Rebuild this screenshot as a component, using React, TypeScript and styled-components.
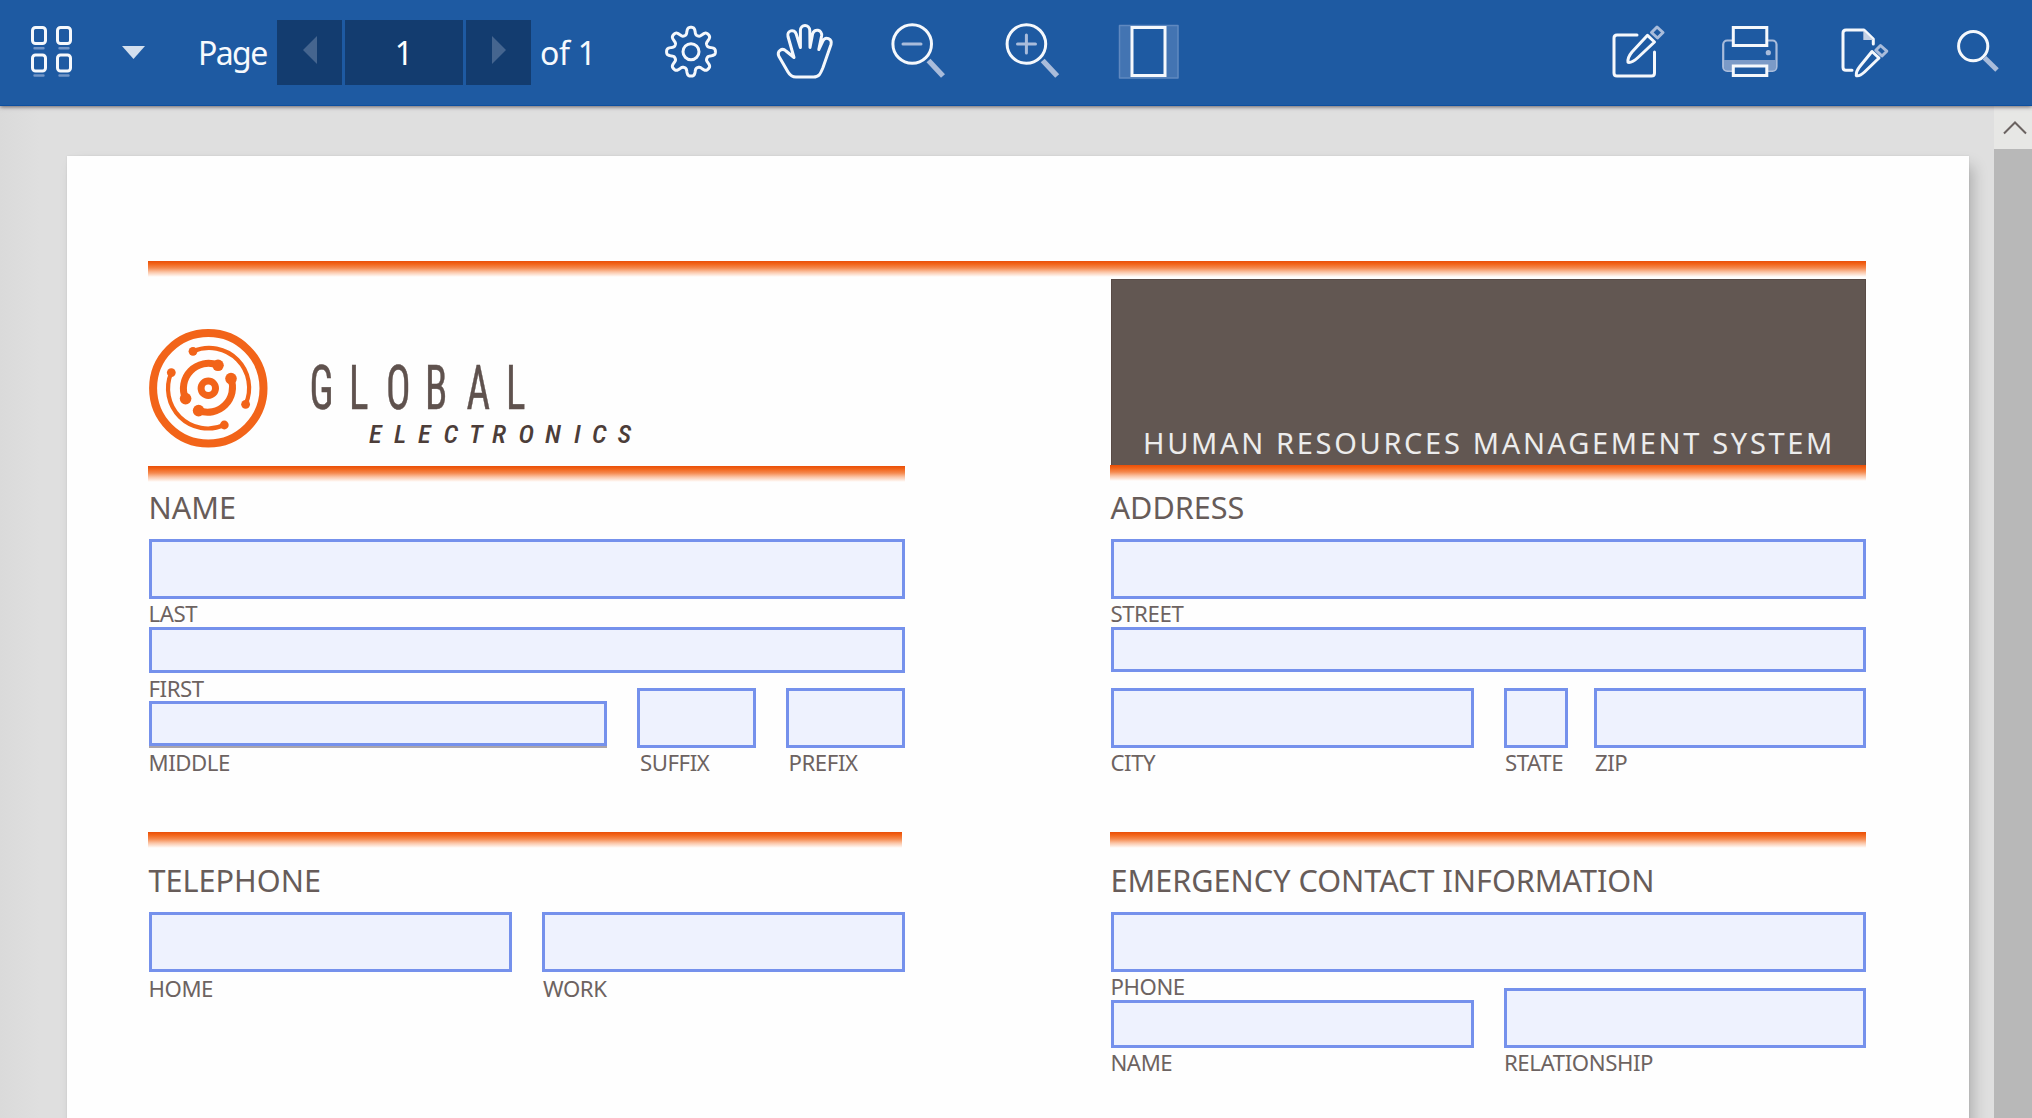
import React from "react";
import styled, { createGlobalStyle } from "styled-components";

const GlobalStyle = createGlobalStyle`
  * { box-sizing: border-box; }
  html, body { margin: 0; padding: 0; overflow: hidden; }
  body { font-family: "Noto Sans", "Open Sans", sans-serif; background: #dfdfdf; }
`;

const ORANGE = "#f26419";
const BROWN = "#625752";

const Shell = styled.div`
  display: flex;
  flex-direction: column;
  width: 2032px;
  height: 1118px;
  overflow: hidden;
  background: #dfdfdf;
`;

const Toolbar = styled.header`
  display: flex;
  align-items: center;
  flex: none;
  height: 106px;
  padding-left: 26px;
  background: #1e5aa2;
  border-bottom: 1px solid #0d4f9f;
  box-shadow: 0 1px 4px rgba(40, 30, 40, 0.65);
  z-index: 1;
`;

const ToolGroup = styled.div<{ $push?: boolean }>`
  display: flex;
  align-items: center;
  margin-left: ${(p) => (p.$push ? "auto" : "0")};
`;

const ToolIcon = styled.svg`
  display: block;
  flex: none;
  height: 70px;
  fill: none;
  stroke: #f5f8fc;
  stroke-width: 3;
  stroke-linejoin: round;
  stroke-linecap: round;

  .soft { stroke: #a9bcdb; }
  .tint { fill: #7b9ac7; stroke: none; }
`;

const PagerText = styled.span<{ $width: number; $tracking: number }>`
  flex: none;
  width: ${(p) => p.$width}px;
  font-size: 32px;
  font-weight: 450;
  line-height: 66px;
  letter-spacing: ${(p) => p.$tracking}px;
  color: #f6f9fd;
  white-space: pre;
`;

const Pager = styled.div`
  display: flex;
  gap: 3px;
  margin: 0 9px 0 6px;
`;

const PagerCell = styled.div<{ $width: number }>`
  display: flex;
  align-items: center;
  justify-content: center;
  width: ${(p) => p.$width}px;
  height: 65px;
  background: #133c6f;
  color: #fff;
  font-size: 32px;
  line-height: 65px;
`;

const Arrow = styled.svg`
  width: 14px;
  height: 28px;
  margin-bottom: 6px;
  fill: #45658f;
`;

const Viewport = styled.main`
  display: flex;
  flex: 1;
  min-height: 0;
`;

const Canvas = styled.div`
  flex: 1;
  padding: 50px 25px 0 67px;
  background: linear-gradient(to right, #dadada 0, #dfdfdf 40px);
  overflow: hidden;
`;

const Sheet = styled.article`
  height: 1100px;
  padding: 105px 0 0 81px;
  background: #fefefe;
  box-shadow: 6px 8px 14px -2px rgba(0, 0, 0, 0.22), 0 0 2px rgba(0, 0, 0, 0.08);
`;

const Scrollbar = styled.aside`
  display: flex;
  flex-direction: column;
  flex: none;
  width: 38px;
  background: #b8b8b8;
`;

const ScrollButton = styled.div`
  display: flex;
  align-items: center;
  justify-content: center;
  height: 43px;
  padding: 1px 0 0 4px;
  background: #e7e7e5;
`;

const Rule = styled.div<{ $width: number }>`
  width: ${(p) => p.$width}px;
  height: 16px;
  background: linear-gradient(to bottom, #e94e08 0, #f26419 3px, #f5894e 7px, #fbc4a5 11px, #fff 16px);
`;

const Columns = styled.div`
  display: grid;
  grid-template-columns: 757px 757px;
  column-gap: 205px;
`;

const Column = styled.section`
  display: flex;
  flex-direction: column;
`;

const BrandArea = styled.div`
  height: 189px;
  padding-top: 43px;
`;

const Banner = styled.div`
  display: flex;
  align-items: flex-end;
  height: 186px;
  margin: 2px 1px 0 1px;
  background: ${BROWN};
  border: 1px solid #594b46;
  border-bottom: 0;
`;

const BannerTitle = styled.div`
  padding-left: 31px;
  font-size: 29px;
  line-height: 44px;
  letter-spacing: 2.67px;
  color: #ececec;
  white-space: nowrap;
`;

const Heading = styled.h2<{ $height: number; $line: number }>`
  margin: 0;
  padding-left: 0.5px;
  height: ${(p) => p.$height}px;
  font-size: 30.6px;
  font-weight: 420;
  line-height: ${(p) => p.$line}px;
  letter-spacing: 0;
  color: #675c59;
`;

const Fields = styled.div<{ $tracks?: string }>`
  display: grid;
  grid-template-columns: ${(p) => p.$tracks ?? "756px"};
  margin-left: 1px;
`;

const Cell = styled.div<{ $drop?: number }>`
  padding-top: ${(p) => p.$drop ?? 0}px;
`;

const Input = styled.div<{ $height?: number; $shaded?: boolean }>`
  height: ${(p) => p.$height ?? 60}px;
  background: #eef2fe;
  border: 3px solid #7591ec;
  ${(p) => p.$shaded && "margin-bottom: 2px; box-shadow: 0 2px 0 #aaa4ab;"}
`;

const Label = styled.div<{ $indent?: number; $line?: number }>`
  height: 28px;
  padding-left: ${(p) => p.$indent ?? 0}px;
  margin-left: -0.6px;
  font-size: 22.2px;
  font-weight: 450;
  line-height: ${(p) => p.$line ?? 30}px;
  letter-spacing: -0.4px;
  color: #6d6361;
  white-space: nowrap;
`;

const Gap = styled.div`
  height: 56px;
`;

const LogoArt = styled.svg`
  display: block;
  width: 510px;
  height: 130px;
`;

const gearPath = (() => {
  const pts: string[] = [];
  for (let i = 0; i < 320; i++) {
    const a = (i / 320) * Math.PI * 2;
    const r = 20.8 + (3.6 * Math.tanh(1.7 * Math.cos(8 * a))) / Math.tanh(1.7);
    pts.push(`${(691 + r * Math.cos(a)).toFixed(2)} ${(51.7 + r * Math.sin(a)).toFixed(2)}`);
  }
  return `M${pts.join("L")}Z`;
})();

/* Every toolbar glyph is drawn in toolbar coordinates; from/to crop its own slice. */
const Glyph = ({ from, to, children }: { from: number; to: number; children: React.ReactNode }) => (
  <ToolIcon width={to - from} viewBox={`${from} 18 ${to - from} 70`}>
    {children}
  </ToolIcon>
);

const glyphX = (lefts: number[], origin: number, scale: number) =>
  lefts.map((x) => ((x - origin) / scale).toFixed(2)).join(" ");

const Logo = () => (
  <LogoArt viewBox="148 320 510 130">
    <g fill="none" stroke={ORANGE} strokeLinecap="round">
      <circle cx="208.3" cy="388.3" r="55.2" strokeWidth="8" />
      <circle cx="208.3" cy="388.3" r="7.2" strokeWidth="7" />
      <g strokeWidth="4.2">
        <path d="M193 351.3A40 40 0 0 1 245.6 404.3" />
        <path d="M171.3 372.6A40 40 0 0 0 224.3 425" />
      </g>
      <g strokeWidth="7">
        <path d="M218 365.3A25 25 0 0 0 185.6 398.6" />
        <path d="M231 378.6A25 25 0 0 1 198.6 410.6" />
      </g>
    </g>
    <g fill={ORANGE}>
      <circle cx="193" cy="351.3" r="4.4" />
      <circle cx="245.6" cy="404.3" r="4.4" />
      <circle cx="171.3" cy="372.6" r="4.4" />
      <circle cx="224.3" cy="425" r="4.4" />
      <circle cx="218" cy="365.3" r="5.8" />
      <circle cx="185.6" cy="398.6" r="5.8" />
      <circle cx="231" cy="378.6" r="5.8" />
      <circle cx="198.6" cy="410.6" r="5.8" />
    </g>
    <text
      transform="translate(309.5 409) scale(0.67 1)"
      x={glyphX([309.5, 349, 386, 425, 466.5, 506], 309.5, 0.67)}
      y="0"
      fontFamily="Roboto, sans-serif"
      fontSize="61"
      fontWeight="400"
      fontStretch="75%"
      fill="#5f524e"
      stroke="#5f524e"
      strokeWidth="0.5"
    >
      GLOBAL
    </text>
    <text
      transform="translate(370 442.5)"
      x={glyphX([369, 394, 418, 443.5, 469, 492, 518.5, 545, 574, 592, 617.5], 370, 1)}
      y="0"
      fontFamily="Roboto, sans-serif"
      fontSize="26.5"
      fontStyle="italic"
      fontWeight="500"
      fontStretch="75%"
      fill="#4c3d39"
    >
      ELECTRONICS
    </text>
  </LogoArt>
);

export default function App() {
  return (
    <Shell>
      <GlobalStyle />
      <Toolbar>
        <ToolGroup>
          <Glyph from={26} to={121}>
            <rect x="32.5" y="27.5" width="13" height="16" rx="3" />
            <rect x="57.5" y="27.5" width="13" height="16" rx="3" />
            <rect x="32.5" y="55" width="13" height="16" rx="3" />
            <rect x="57.5" y="55" width="13" height="16" rx="3" />
            <g stroke="#7396c7" strokeWidth="2.4">
              <path d="M34.5 48.3H43.5M59.5 48.3H68.5M34.5 75.5H43.5M59.5 75.5H68.5" />
            </g>
          </Glyph>
          <Glyph from={121} to={198}>
            <path d="M122 46H145L133.5 59Z" fill="#d3dfee" stroke="none" />
          </Glyph>
          <PagerText $width={73} $tracking={-1.6}>Page</PagerText>
          <Pager>
            <PagerCell $width={65}>
              <Arrow viewBox="0 0 14 28"><path d="M14 0V28L0 14Z" /></Arrow>
            </PagerCell>
            <PagerCell $width={118}>1</PagerCell>
            <PagerCell $width={65}>
              <Arrow viewBox="0 0 14 28"><path d="M0 0V28L14 14Z" /></Arrow>
            </PagerCell>
          </Pager>
          <PagerText $width={60} $tracking={-0.3}>of 1</PagerText>
          <Glyph from={600} to={770}>
            <path d={gearPath} />
            <circle cx="691" cy="51.7" r="8" />
          </Glyph>
          <Glyph from={770} to={880}>
            <path d="M794 57.5L788 36.5C786.5 30.5 794.5 28.3 796.2 34L800.4 47.5V30.5C800.4 23.8 809.6 23.8 809.8 30.5L810 47.5L812.6 34C814 28 822.5 29.5 821.6 36L818.8 49.5L822.8 41C825.5 36 832.5 38.8 831 44.5L823 67.5C820.5 73.5 819.3 77 813.5 77H796C792 77 790 75.5 788 72L779 56.5C776.5 51.3 782 47.2 786 51Z" />
          </Glyph>
          <Glyph from={880} to={990}>
            <circle cx="912.2" cy="44" r="19.3" />
            <path className="soft" d="M903 44H921" />
            <path className="soft" strokeWidth="5.4" strokeLinecap="butt" d="M928.5 60.5L943 76" />
          </Glyph>
          <Glyph from={990} to={1100}>
            <circle cx="1026.4" cy="44" r="19.3" />
            <path className="soft" d="M1017.5 44H1035.5M1026.4 35V53" />
            <path className="soft" strokeWidth="5.4" strokeLinecap="butt" d="M1042.7 60.5L1057.2 76" />
          </Glyph>
          <Glyph from={1100} to={1190}>
            <rect x="1119.5" y="25.5" width="58.5" height="52.5" fill="#4374b2" stroke="#6089c0" strokeWidth="1.5" />
            <rect x="1132" y="27.5" width="33" height="48" fill="#1e5aa2" strokeLinejoin="miter" />
          </Glyph>
        </ToolGroup>
        <ToolGroup $push>
          <Glyph from={1600} to={1700}>
            <path d="M1637 35H1617Q1614 35 1614 38V73Q1614 76 1617 76H1651.5Q1654.5 76 1654.5 73V52" />
            <path d="M1647.5 35.3L1654.5 42L1638 57.5C1634.5 60.8 1630.5 62.8 1628 62.3C1627.5 59 1629.5 55 1632 52Z" />
            <path className="soft" d="M1651.5 32.5L1657 27L1663 32.5L1657.5 38Z" />
          </Glyph>
          <Glyph from={1700} to={1820}>
            <rect className="soft" x="1723.2" y="40.5" width="53.3" height="30.3" rx="4" strokeWidth="2.2" />
            <path className="tint" d="M1724 60H1776V67Q1776 70.5 1772 70.5H1728Q1724 70.5 1724 67Z" />
            <circle cx="1768.3" cy="52.7" r="2.6" fill="#a9bcdb" stroke="none" />
            <rect x="1733.3" y="27.5" width="33.5" height="18" fill="#1e5aa2" strokeLinejoin="miter" />
            <rect x="1733.3" y="66" width="33.5" height="9.5" fill="#1e5aa2" strokeLinejoin="miter" />
          </Glyph>
          <Glyph from={1820} to={1920}>
            <path d="M1852 70.3H1846Q1843 70.3 1843 67.3V33Q1843 30 1846 30H1864L1873.3 39V44" />
            <path d="M1863.3 30.5V40H1873.3Z" fill="#c3d0e4" stroke="none" />
            <path d="M1872 51.5L1879 58L1864.5 72C1861.5 74.8 1858.5 76.2 1856.3 75.7C1856 72.5 1857.8 69 1860 66.3Z" />
            <path className="soft" d="M1875.8 50.2L1880.5 45.5L1886.8 51.2L1882 56Z" />
          </Glyph>
          <Glyph from={1920} to={2032}>
            <circle cx="1973.2" cy="46.2" r="14.6" />
            <path className="soft" strokeWidth="5" strokeLinecap="butt" d="M1984.5 57.7L1997 70" />
          </Glyph>
        </ToolGroup>
      </Toolbar>

      <Viewport>
        <Canvas>
          <Sheet>
            <Rule $width={1718} />
            <Columns>
              <Column>
                <BrandArea><Logo /></BrandArea>
                <Rule $width={757} />
                <Heading $height={57} $line={50}>NAME</Heading>
                <Fields>
                  <Input />
                  <Label>LAST</Label>
                  <Input $height={46} />
                </Fields>
                <Fields $tracks="458px 30px 119px 30px 119px">
                  <Cell>
                    <Label $line={31}>FIRST</Label>
                    <Input $height={45} $shaded />
                    <Label>MIDDLE</Label>
                  </Cell>
                  <span />
                  <Cell $drop={15}>
                    <Input />
                    <Label $indent={3.5}>SUFFIX</Label>
                  </Cell>
                  <span />
                  <Cell $drop={15}>
                    <Input />
                    <Label $indent={3}>PREFIX</Label>
                  </Cell>
                </Fields>
                <Gap />
                <Rule $width={754} />
                <Heading $height={64} $line={64}>TELEPHONE</Heading>
                <Fields $tracks="363px 30px 363px">
                  <Cell>
                    <Input />
                    <Label $line={33}>HOME</Label>
                  </Cell>
                  <span />
                  <Cell>
                    <Input />
                    <Label $line={33} $indent={1.5}>WORK</Label>
                  </Cell>
                </Fields>
              </Column>

              <Column>
                <Banner>
                  <BannerTitle>HUMAN RESOURCES MANAGEMENT SYSTEM</BannerTitle>
                </Banner>
                <Rule $width={756} />
                <Heading $height={58} $line={53}>ADDRESS</Heading>
                <Fields $tracks="755px">
                  <Input />
                  <Label>STREET</Label>
                  <Input $height={45} />
                </Fields>
                <Fields $tracks="363px 30px 64px 26px 272px">
                  <Cell $drop={16}>
                    <Input />
                    <Label>CITY</Label>
                  </Cell>
                  <span />
                  <Cell $drop={16}>
                    <Input />
                    <Label $indent={1.5}>STATE</Label>
                  </Cell>
                  <span />
                  <Cell $drop={16}>
                    <Input />
                    <Label $indent={1.5}>ZIP</Label>
                  </Cell>
                </Fields>
                <Gap />
                <Rule $width={756} />
                <Heading $height={64} $line={64}>EMERGENCY CONTACT INFORMATION</Heading>
                <Fields $tracks="755px">
                  <Input />
                </Fields>
                <Fields $tracks="363px 30px 362px">
                  <Cell>
                    <Label>PHONE</Label>
                    <Input $height={48} />
                    <Label>NAME</Label>
                  </Cell>
                  <span />
                  <Cell $drop={16}>
                    <Input />
                    <Label $indent={0.5}>RELATIONSHIP</Label>
                  </Cell>
                </Fields>
              </Column>
            </Columns>
          </Sheet>
        </Canvas>
        <Scrollbar>
          <ScrollButton>
            <svg width="26" height="16" viewBox="0 0 26 16" fill="none" stroke="#6b6361" strokeWidth="2">
              <path d="M2 13.5L13 2.5L24 13.5" />
            </svg>
          </ScrollButton>
        </Scrollbar>
      </Viewport>
    </Shell>
  );
}
